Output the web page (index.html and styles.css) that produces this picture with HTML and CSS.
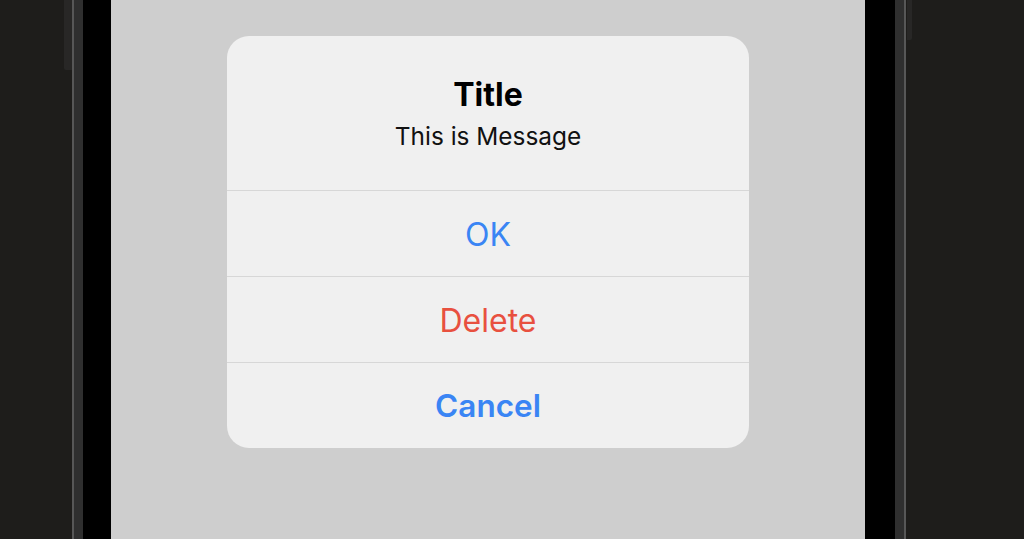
FILE: index.html
```html
<!DOCTYPE html>
<html lang="en">
<head>
    <meta charset="UTF-8">
    <meta name="viewport" content="width=device-width, initial-scale=1.0">
    <title>Alert</title>
    <link rel="stylesheet" href="styles.css">
</head>
<body>
    <div class="desk">
        <div class="side side-left">
            <div class="knob knob-left"></div>
        </div>
        <div class="rim rim-left"></div>
        <div class="bezel bezel-left"></div>
        <div class="screen">
            <div class="alert">
                <div class="alert-head">
                    <h2 class="alert-title">Title</h2>
                    <p class="alert-msg">This is Message</p>
                </div>
                <button class="alert-btn">OK</button>
                <button class="alert-btn danger">Delete</button>
                <button class="alert-btn cancel">Cancel</button>
            </div>
        </div>
        <div class="bezel bezel-right"></div>
        <div class="rim rim-right"></div>
        <div class="side side-right">
            <div class="knob knob-right"></div>
        </div>
    </div>
</body>
</html>
```

FILE: styles.css
```css
body {
    margin: 0;
    padding: 0;
    background-color: #1e1d1b;
    font-family: Inter, "Noto Sans", sans-serif;
}

.desk {
    display: flex;
    height: 539px;
    overflow: hidden;
}

.side {
    background-color: #1e1d1b;
}

.side-left {
    width: 72px;
    display: flex;
    justify-content: flex-end;
}

.side-right {
    flex: 1;
    padding-left: 1px;
}

.knob {
    background-color: #282726;
}

.knob-left {
    width: 8px;
    height: 70px;
    border-radius: 0 0 0 2px;
}

.knob-right {
    width: 5px;
    height: 40px;
    border-radius: 0 0 2px 0;
}

.rim {
    width: 9px;
    background-color: #2f2f2f;
}

.rim-left {
    border-left: 2px solid #575757;
}

.rim-right {
    border-right: 2px solid #575757;
}

.bezel {
    background-color: #000;
}

.bezel-left {
    width: 28px;
}

.bezel-right {
    width: 30px;
}

.screen {
    width: 754px;
    background-color: #cecece;
    display: flex;
    justify-content: center;
    align-items: flex-start;
    padding-top: 36px;
    box-sizing: border-box;
}

.alert {
    width: 522px;
    background-color: #f0f0f0;
    border-radius: 22px;
    overflow: hidden;
    display: flex;
    flex-direction: column;
}

.alert-head {
    height: 154px;
    box-sizing: border-box;
    padding-top: 39px;
    text-align: center;
    color: #000;
}

.alert-title {
    margin: 0;
    font-size: 32px;
    line-height: 40px;
    font-weight: 700;
}

.alert-msg {
    margin: 6px 0 0;
    font-size: 24.4px;
    line-height: 30px;
    color: #111;
}

.alert-btn {
    height: 86px;
    border: none;
    border-top: 1.5px solid #d7d7d7;
    background: none;
    padding: 2px 0 0;
    font-family: inherit;
    font-size: 32px;
    color: #3a85f4;
    cursor: pointer;
}

.alert-btn.danger {
    color: #e8503f;
}

.alert-btn.cancel {
    font-size: 31.5px;
    font-weight: 600;
    padding-top: 0;
}
```
